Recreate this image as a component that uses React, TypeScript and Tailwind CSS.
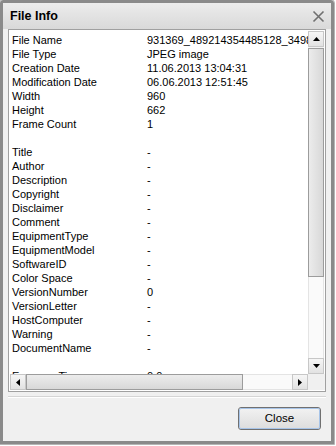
const rows: [string, string][] = [
  ["File Name", "931369_489214354485128_349891234567_n.jpg"],
  ["File Type", "JPEG image"],
  ["Creation Date", "11.06.2013 13:04:31"],
  ["Modification Date", "06.06.2013 12:51:45"],
  ["Width", "960"],
  ["Height", "662"],
  ["Frame Count", "1"],
  ["", ""],
  ["Title", "-"],
  ["Author", "-"],
  ["Description", "-"],
  ["Copyright", "-"],
  ["Disclaimer", "-"],
  ["Comment", "-"],
  ["EquipmentType", "-"],
  ["EquipmentModel", "-"],
  ["SoftwareID", "-"],
  ["Color Space", "-"],
  ["VersionNumber", "0"],
  ["VersionLetter", "-"],
  ["HostComputer", "-"],
  ["Warning", "-"],
  ["DocumentName", "-"],
  ["", ""],
  ["ExposureTime", "0.0 sec"],
  ["FNumber", "-"],
];

function Arrow({ dir }: { dir: "up" | "down" | "left" | "right" }) {
  const pts = {
    up: "0,4 7,4 3.5,0",
    down: "0,0 7,0 3.5,4",
    left: "4,0 4,7 0,3.5",
    right: "0,0 0,7 4,3.5",
  }[dir];
  const w = dir === "up" || dir === "down" ? 7 : 4;
  const h = dir === "up" || dir === "down" ? 4 : 7;
  return (
    <svg width={w} height={h} viewBox={`0 0 ${w} ${h}`}>
      <polygon points={pts} fill="#000" />
    </svg>
  );
}

function ArrowBtn({ dir }: { dir: "up" | "down" | "left" | "right" }) {
  return (
    <div className="flex h-4 w-4 shrink-0 items-center justify-center border border-[#c7c7c7] bg-gradient-to-b from-[#f6f6f6] to-[#e2e2e2]">
      <Arrow dir={dir} />
    </div>
  );
}

export default function App() {
  return (
    <div
      className="h-[446px] w-[336px] bg-white"
      style={{ fontFamily: "Tahoma, 'Liberation Sans', sans-serif" }}
    >
      <div className="flex h-[444px] w-[334px] flex-col rounded-t-[3px] border-[3px] border-[#8a8a8a] bg-[#f0f0f0] outline outline-1 outline-[#b5b5b5]">
        <div className="flex h-[26px] shrink-0 items-center justify-between bg-gradient-to-b from-[#ececec] to-[#d9d9d9] pl-[7px] pr-[6px]">
          <span className="text-[12.5px] font-bold text-black">File Info</span>
          <svg width="13" height="13" viewBox="0 0 13 13">
            <path d="M1.5 1.5 L11.5 11.5 M11.5 1.5 L1.5 11.5" stroke="#707070" strokeWidth="1.6" />
          </svg>
        </div>
        <div className="px-[5px]">
          <div className="flex h-[363px] flex-col border border-[#a0a0a0] bg-white">
            <div className="flex min-h-0 flex-1">
              <div className="min-w-0 flex-1 overflow-hidden pl-[3px] pt-[3px]">
                {rows.map(([k, v], i) => (
                  <div key={i} className="flex h-[14px] items-center text-[11px] leading-[14px] text-black">
                    <span className="w-[135px] shrink-0 whitespace-nowrap">{k}</span>
                    <span className="whitespace-nowrap">{v}</span>
                  </div>
                ))}
              </div>
              <div className="mr-[1px] mt-[1px] flex w-4 shrink-0 flex-col bg-[#f2f2f2]">
                <ArrowBtn dir="up" />
                <div className="mt-[1px] h-[229px] border border-[#9c9c9c] bg-gradient-to-r from-[#ececec] to-[#d8d8d8]" />
                <div className="flex-1 border-x border-[#e4e4e4] bg-[#fafafa]" />
                <ArrowBtn dir="down" />
              </div>
            </div>
            <div className="mb-[1px] ml-[1px] flex h-4 shrink-0 bg-[#f2f2f2]">
              <ArrowBtn dir="left" />
              <div className="w-[217px] border border-[#9c9c9c] bg-gradient-to-b from-[#ececec] to-[#d8d8d8]" />
              <div className="flex-1 border-y border-[#e4e4e4] bg-[#fafafa]" />
              <ArrowBtn dir="right" />
              <div className="mr-[1px] w-4 bg-[#f0f0f0]" />
            </div>
          </div>
        </div>
        <div className="mx-[5px] mt-[4px] border-b border-t border-[#d5d5d5] border-b-white" />
        <div className="flex justify-end pr-[10px] pt-[9px]">
          <div className="flex h-[23px] w-[83px] items-center justify-center rounded-[3px] border border-[#707070] bg-gradient-to-b from-[#f2f2f2] to-[#dddddd] text-[11.5px] text-black outline outline-1 -outline-offset-2 outline-[#a7c4e8]">
            Close
          </div>
        </div>
      </div>
    </div>
  );
}
